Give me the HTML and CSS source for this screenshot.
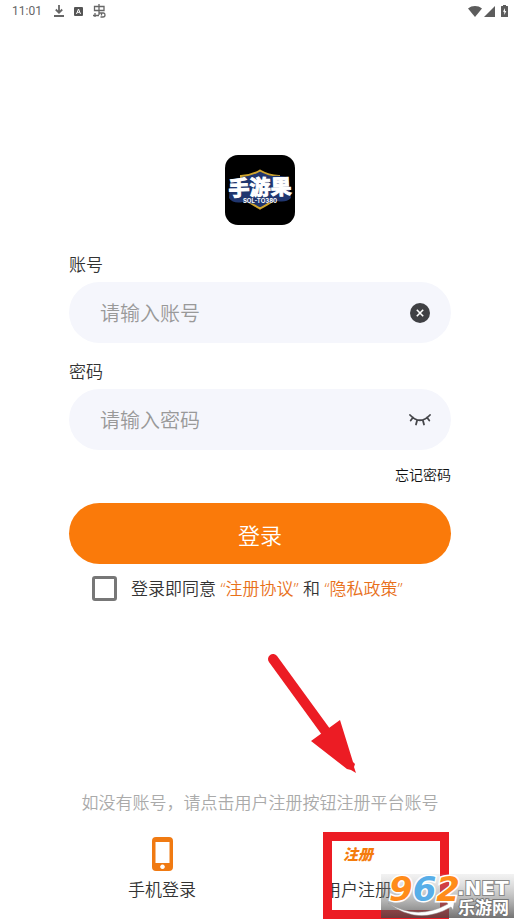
FILE: index.html
```
<!DOCTYPE html>
<html lang="zh-CN">
<head>
    <meta charset="UTF-8">
    <meta name="viewport" content="width=device-width, initial-scale=1.0">
    <title>登录</title>
    <link rel="stylesheet" href="styles.css">
</head>
<body>
    <header class="status-bar">
        <div class="status-left">
            <span class="time">11:01</span>
            <svg width="10" height="12" viewBox="0 0 10 12"><path d="M5 0v7M1.800 4.500L5 7.800l3.200-3.300M0 11h10" fill="none" stroke="#666" stroke-width="1.800"/></svg>
            <svg width="9" height="9" viewBox="0 0 9 9"><rect width="9" height="9" rx="1" fill="#555"/><path d="M2.500 7l2-5 2 5M3.300 5.300h2.400" fill="none" stroke="#fff"/></svg>
            <svg width="13" height="14" viewBox="0 0 13 14"><path d="M6 0v11M1.500 6.500v-4h9.500v4zM0 11.500h6M2 9v4M6 9h4.500q1.500 0 1.500 2t-2 2H7.500M8.500 9v2.500" fill="none" stroke="#666" stroke-width="1.300"/></svg>
        </div>
        <div class="status-right">
            <svg width="14" height="11" viewBox="0 0 14 11"><path d="M0 2.500C4-.8 10-.8 14 2.500L7 11z" fill="#5c5c5c"/></svg>
            <svg width="11" height="11" viewBox="0 0 11 11"><path d="M11 0v11H0z" fill="#5c5c5c"/></svg>
            <svg class="battery" width="7" height="12" viewBox="0 0 7 12"><path d="M2 0h3v1h1.500q.5 0 .5.500v10q0 .5-.5.500h-6q-.5 0-.5-.5v-10Q0 1 .5 1H2z" fill="#5c5c5c"/><path d="M4 3L2 6.700h1.300V10l2-3.900H4z" fill="#fff"/></svg>
        </div>
    </header>

    <main class="login">
        <svg class="logo" width="70" height="70" viewBox="0 0 70 70">
            <rect width="70" height="70" rx="13" fill="#000"/>
            <path d="M35 15.500c6 3.500 11 5 19 5.500v14c0 9-9 13-19 18.500-10-5.500-19-9.500-19-18.500V21c8-.5 13-2 19-5.500z" fill="#20366f" stroke="#d0a52c" stroke-width="2"/>
            <path d="M5 28q3-6 15-5 15-3 28-2 13-1 15 4l3 18q-5 5-14 3-17 5-34 1-10 2-14-4z" fill="#20366f"/>
            <text class="logo-name" x="35" y="40" transform="rotate(-2 35 35)">手游果</text>
            <text class="logo-sub" x="35" y="48">SOL-TO380</text>
        </svg>

        <form class="form">
            <label class="label" for="account">账号</label>
            <div class="field">
                <input type="text" id="account" placeholder="请输入账号">
                <button type="button" class="icon-button" aria-label="清除">
                    <svg width="20" height="20" viewBox="0 0 20 20"><circle cx="10" cy="10" r="10" fill="#3f4044"/><path d="M6.800 6.800l6.400 6.400M13.200 6.800l-6.400 6.400" stroke="#fff" stroke-width="1.600"/></svg>
                </button>
            </div>

            <label class="label" for="password">密码</label>
            <div class="field">
                <input type="password" id="password" placeholder="请输入密码">
                <button type="button" class="icon-button" aria-label="显示密码">
                    <svg width="22" height="14" viewBox="0 0 22 14"><path d="M1 2q10 10.500 20 0M4 4.500L1.700 7.500M8.200 7L7 11.500M13.800 7l1.200 4.500M18 4.500l2.300 3" fill="none" stroke="#45464a" stroke-width="1.800" stroke-linecap="round"/></svg>
                </button>
            </div>

            <a class="forgot" href="#">忘记密码</a>
            <button type="submit" class="submit">登录</button>

            <div class="agree">
                <input type="checkbox" id="agree">
                <label for="agree">登录即同意 <a href="#">“注册协议”</a> 和 <a href="#">“隐私政策”</a></label>
            </div>
        </form>
    </main>

    <footer class="bottom">
        <p class="hint">如没有账号，请点击用户注册按钮注册平台账号</p>
        <nav class="tabs">
            <a class="tab" href="#">
                <span class="tab-icon">
                    <svg width="21" height="34" viewBox="0 0 21 34"><path fill-rule="evenodd" d="M4 0h13q4 0 4 4v26q0 4-4 4H4q-4 0-4-4V4q0-4 4-4zM3.500 5v21h14V5zM10.500 27.500a2.300 2.300 0 1 0 .01 0z" fill="#f07a12"/></svg>
                </span>
                手机登录
            </a>
            <a class="tab" href="#">
                <span class="tab-icon tab-word">注册</span>
                用户注册
            </a>
        </nav>

        <!-- arrow and frame around the register tab -->
        <svg class="marks" width="260" height="284" viewBox="260 640 260 284">
            <path d="M273 659L329 736" stroke="#ec1c24" stroke-width="10" stroke-linecap="round"/>
            <path d="M340 720L353 762l2 2-1 3 2 6-5-3-4-1L311 741z" fill="#ec1c24"/>
            <rect x="327.500" y="836.500" width="117" height="78" fill="none" stroke="#ec1c24" stroke-width="9"/>
        </svg>

        <svg class="watermark" width="133" height="50" viewBox="0 0 133 50">
            <defs>
                <linearGradient id="shade" x1="0" y1="0" x2="0" y2="1">
                    <stop offset="0" stop-color="#aaa" stop-opacity=".15"/>
                    <stop offset="1" stop-color="#444" stop-opacity=".75"/>
                </linearGradient>
            </defs>
            <rect y="6" width="133" height="44" fill="url(#shade)"/>
            <path d="M7 35q29 18 60 1l-2-3 9-2-2 11-2-3Q37 58 7 35z" fill="#fff" stroke="#999" stroke-width=".5"/>
            <text class="mark-number" x="8" y="33"><tspan fill="#ff8c1a">9</tspan><tspan fill="#58aee8">6</tspan><tspan fill="#ff8c1a">2</tspan></text>
            <text class="mark-net" x="76" y="27">.NET</text>
            <text class="mark-name" x="77" y="46">乐游网</text>
        </svg>
    </footer>
</body>
</html>
```
FILE: styles.css
```
* {
    margin: 0;
    padding: 0;
    box-sizing: border-box;
}

body {
    display: flex;
    flex-direction: column;
    min-height: 100vh;
    background: #fff;
    color: #333;
    font-family: "Noto Sans CJK SC", sans-serif;
    font-weight: 350;
    font-size: 17px;
    line-height: 24px;
}

a {
    color: inherit;
    text-decoration: none;
}

button, input {
    font: inherit;
    border: none;
    background: none;
}

button {
    cursor: pointer;
}

/* Status bar */
.status-bar {
    display: flex;
    justify-content: space-between;
    height: 22px;
    padding: 0 12px;
}

.status-left, .status-right {
    display: flex;
    align-items: center;
}

.status-left {
    gap: 10px;
}

.status-right {
    gap: 2px;
}

.battery {
    margin-left: 4px;
}

.time {
    margin-right: 2px;
    font-family: Roboto, sans-serif;
    font-weight: 400;
    font-size: 12px;
    color: #666;
}

/* Login form */
.login {
    display: flex;
    flex-direction: column;
    align-items: center;
    padding: 133px 69px 0;
}

.form {
    display: flex;
    flex-direction: column;
    width: 100%;
    margin-top: 27px;
}

.label {
    margin-bottom: 6px;
}

.field {
    display: flex;
    align-items: center;
    height: 61px;
    margin-bottom: 16px;
    padding: 0 19px 0 31px;
    border-radius: 31px;
    background: #f5f6fc;
}

.field input {
    flex: 1;
    min-width: 0;
    font-size: 20px;
    line-height: 28px;
    outline: none;
}

.field input::placeholder {
    color: #999;
    opacity: 1;
}

.icon-button {
    display: flex;
    justify-content: center;
    width: 24px;
}

.forgot {
    align-self: flex-end;
    font-size: 14px;
    line-height: 16px;
    color: #111;
}

.submit {
    height: 61px;
    margin-top: 21px;
    border-radius: 31px;
    background: #fa7a0a;
    color: #fff;
    font-size: 22px;
}

.agree {
    display: flex;
    align-items: center;
    gap: 14px;
    margin-top: 12px;
    padding-left: 23px;
    font-family: "Open Sans", "Noto Sans CJK SC", sans-serif;
}

.agree input {
    flex: none;
    appearance: none;
    width: 25px;
    height: 25px;
    border: 3px solid #777;
    border-radius: 3px;
}

.agree a {
    color: #e8701a;
}

/* Bottom area */
.bottom {
    position: relative;
    margin-top: auto;
    padding: 0 64px 23px;
}

.hint {
    color: #aaa;
    text-align: center;
    white-space: nowrap;
    margin: 0 -20px 23px;
}

.tabs {
    display: grid;
    grid-template-columns: 1fr 1fr;
}

.tab {
    display: flex;
    flex-direction: column;
    align-items: center;
    gap: 6px;
}

.tab-icon {
    display: flex;
    align-items: center;
    height: 34px;
}

.tab-word {
    color: #f47c0c;
    font-size: 15px;
    font-weight: 900;
    font-style: italic;
}

.marks {
    position: absolute;
    left: 50%;
    bottom: 0;
    pointer-events: none;
}

.watermark {
    position: absolute;
    right: 6px;
    bottom: 6px;
    pointer-events: none;
}

.logo-name {
    fill: #fff;
    stroke: #fff;
    stroke-width: 1px;
    font-size: 21px;
    font-weight: 700;
    text-anchor: middle;
}

.logo-sub {
    fill: #fff;
    font-family: Inter, sans-serif;
    font-size: 6px;
    font-weight: 700;
    text-anchor: middle;
}

.mark-number, .mark-net, .mark-name {
    paint-order: stroke;
    font-weight: 700;
}

.mark-number {
    font-family: "DejaVu Sans", sans-serif;
    font-size: 34px;
    font-style: italic;
    stroke: #fff;
    stroke-width: 3px;
}

.mark-net {
    fill: #fff;
    stroke: #888;
    stroke-width: 2px;
    font-family: "DejaVu Sans", sans-serif;
    font-size: 20px;
}

.mark-name {
    fill: #fff;
    stroke: #777;
    stroke-width: 2px;
    font-size: 17px;
}
```
